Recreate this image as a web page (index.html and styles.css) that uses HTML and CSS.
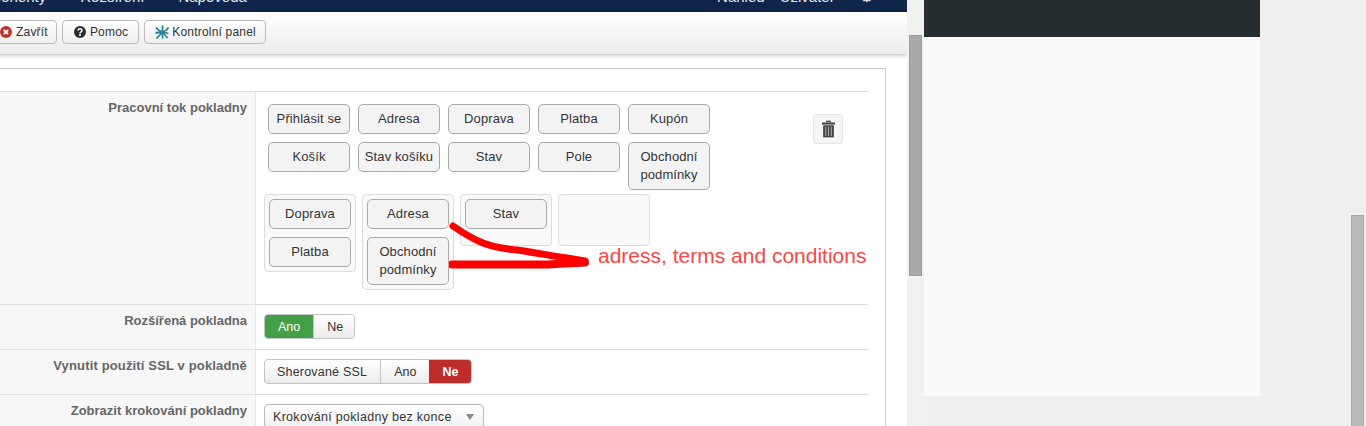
FILE: index.html
```html
<!DOCTYPE html>
<html lang="cs">
<head>
    <meta charset="UTF-8">
    <meta name="viewport" content="width=device-width, initial-scale=1.0">
    <title>Pracovní tok pokladny</title>
    <link rel="stylesheet" href="styles.css">
</head>
<body>
    <div class="admin">
        <nav class="topnav">
            <div class="topnav-left">
                <span>Komponenty</span>
                <span>Rozšíření</span>
                <span>Nápověda</span>
            </div>
            <div class="topnav-right">
                <span>Náhled</span>
                <span>Uživatel</span>
                <span class="topnav-gear">⚙</span>
            </div>
        </nav>

        <div class="toolbar">
            <button class="tool-btn tool-btn-close">
                <svg class="tool-icon" viewBox="0 0 12 12"><circle cx="6" cy="6" r="6" fill="#c4302b"/><path d="M3.8 3.8l4.4 4.4M8.2 3.8l-4.4 4.4" stroke="#fff" stroke-width="1.9"/></svg>
                Zavřít
            </button>
            <button class="tool-btn">
                <svg class="tool-icon" viewBox="0 0 12 12"><circle cx="6" cy="6" r="6" fill="#2b2b2b"/><path d="M4.1 4.6c0-2.4 3.9-2.4 3.9-.2 0 1.5-2 1.4-2 3" fill="none" stroke="#fff" stroke-width="1.5"/><rect x="5.1" y="8.2" width="1.8" height="1.7" fill="#fff"/></svg>
                Pomoc
            </button>
            <button class="tool-btn tool-btn-wide">
                <svg class="tool-icon-star" viewBox="0 0 14 14"><path d="M7.500 .5V13.500M1 2.500C3 5 5 6.500 7.500 7C10 6.500 12 5 13.500 2.500M.5 8L7.500 7L13.500 8.500M1.500 13.500L7.500 7L12.500 13" fill="none" stroke="#2a8595" stroke-width="1.8"/></svg>
                Kontrolní panel
            </button>
        </div>

        <div class="panel">
            <div class="panel-top"></div>

            <div class="form-row form-row-flow">
                <div class="form-label">Pracovní tok pokladny</div>
                <div class="form-field flow-field">
                    <div class="flow-top">
                        <div class="palette">
                            <div class="step">Přihlásit se</div>
                            <div class="step">Adresa</div>
                            <div class="step">Doprava</div>
                            <div class="step">Platba</div>
                            <div class="step">Kupón</div>
                            <div class="step">Košík</div>
                            <div class="step">Stav košíku</div>
                            <div class="step">Stav</div>
                            <div class="step">Pole</div>
                            <div class="step">Obchodní podmínky</div>
                        </div>
                        <div class="trash">
                            <svg viewBox="0 0 14 18" width="13" height="18"><path d="M5 2V.8h4V2" fill="none" stroke="#444" stroke-width="1.2"/><rect y="2" width="14" height="2.2" fill="#444"/><path d="M1.2 5h11.6v13H1.2z" fill="#444"/><path d="M4 6.5v10M7 6.5v10M10 6.5v10" stroke="#bbb" stroke-width="1"/></svg>
                        </div>
                    </div>
                    <div class="columns">
                        <div class="column">
                            <div class="step">Doprava</div>
                            <div class="step">Platba</div>
                        </div>
                        <div class="column">
                            <div class="step">Adresa</div>
                            <div class="step">Obchodní podmínky</div>
                        </div>
                        <div class="column">
                            <div class="step">Stav</div>
                        </div>
                        <div class="column"></div>
                    </div>

                    <!-- red marker scribble from the screenshot -->
                    <svg class="scribble" viewBox="0 0 150 50" width="150" height="50">
                        <path d="M4 4C14 11 24 17 34 21C46 26 58 27 68 28C88 31 104 34 118 36L136 39" fill="none" stroke="#f00" stroke-width="7" stroke-linecap="round"/>
                        <path d="M3 42.500H100C112 42 122 41 136 40.500" fill="none" stroke="#f00" stroke-width="8" stroke-linecap="round"/>
                    </svg>
                    <div class="scribble-note">adress, terms and conditions</div>
                </div>
            </div>

            <div class="form-row">
                <div class="form-label">Rozšířená pokladna</div>
                <div class="form-field">
                    <div class="toggle">
                        <span class="toggle-item toggle-yes">Ano</span>
                        <span class="toggle-item toggle-off">Ne</span>
                    </div>
                </div>
            </div>

            <div class="form-row">
                <div class="form-label form-label-wide">Vynutit použití SSL v pokladně</div>
                <div class="form-field">
                    <div class="toggle">
                        <span class="toggle-item toggle-ssl">Sherované SSL</span>
                        <span class="toggle-item">Ano</span>
                        <span class="toggle-item toggle-no">Ne</span>
                    </div>
                </div>
            </div>

            <div class="form-row">
                <div class="form-label">Zobrazit krokování pokladny</div>
                <div class="form-field">
                    <div class="select">
                        <span>Krokování pokladny bez konce</span>
                        <span class="select-arrow"></span>
                    </div>
                </div>
            </div>
        </div>
    </div>

    <div class="gutter"><div class="thumb"></div></div>

    <aside class="sidebar">
        <div class="sidebar-head"></div>
        <div class="sidebar-body"></div>
    </aside>

    <div class="gutter-page"><div class="thumb-page"></div></div>
</body>
</html>
```

FILE: styles.css
```css
* {
    box-sizing: border-box;
}
body, html {
    margin: 0;
    padding: 0;
    height: 426px;
    overflow: hidden;
}
body {
    display: flex;
    background-color: #efefef;
    font-family: "Liberation Sans", Arial, sans-serif;
    font-size: 12px;
    color: #333;
}
.admin {
    width: 907px;
    flex: none;
    height: 426px;
    background-color: #fff;
    overflow: hidden;
}

/* top nav, only the bottom of its text shows */
.topnav {
    height: 12px;
    background-color: #10254a;
    display: flex;
    justify-content: space-between;
    align-items: flex-end;
    padding-bottom: 7px;
    color: #e4e8ee;
    font-size: 15px;
    line-height: 16px;
    overflow: hidden;
}
.topnav-left {
    display: flex;
    gap: 34px;
    margin-left: -38px;
}
.topnav-right {
    display: flex;
    gap: 15px;
    margin-right: 34px;
}
.topnav-gear {
    margin-left: 12px;
}

.toolbar {
    height: 42px;
    display: flex;
    align-items: flex-start;
    gap: 5px;
    padding-top: 8px;
    margin-left: -12px;
    background: linear-gradient(#fff, #ececec);
    box-shadow: 0 1px 4px rgba(0, 0, 0, 0.3);
    position: relative;
}
.tool-btn {
    height: 24px;
    display: flex;
    align-items: center;
    gap: 4px;
    padding: 0 10px 0 11px;
    background: linear-gradient(#fff, #eee);
    border: 1px solid #bbb;
    border-radius: 4px;
    font-family: inherit;
    font-size: 12px;
    letter-spacing: 0.2px;
    color: #333;
}
.tool-btn-close {
    padding-right: 8px;
}
.tool-btn-wide {
    padding: 0 9px 0 10px;
    gap: 3px;
}
.tool-icon {
    width: 12px;
    height: 12px;
}
.tool-icon-star {
    width: 14px;
    height: 14px;
}

.panel {
    margin: 14px 21px 0 -10px;
    border: 1px solid #ccc;
    padding-right: 17px;
}
.panel-top {
    height: 23px;
    border-bottom: 1px solid #ddd;
}

.form-row {
    display: flex;
    height: 45px;
    border-bottom: 1px solid #ddd;
}
.form-row-flow {
    height: 213px;
}
.form-label {
    width: 265px;
    flex: none;
    background-color: #f7f7f7;
    border-right: 1px solid #e8e8e8;
    padding: 8px 8px 0 0;
    text-align: right;
    font-size: 13px;
    line-height: 16px;
    font-weight: bold;
    color: #666;
}
.form-label-wide {
    letter-spacing: 0.15px;
}
.form-field {
    flex: 1;
    padding: 9px 0 0 8px;
}

.flow-field {
    position: relative;
    padding-top: 12px;
}
.flow-top {
    display: flex;
    align-items: flex-start;
}
.palette {
    width: 450px;
    margin-left: 4px;
    height: 90px;
    display: grid;
    grid-template-columns: repeat(5, 82px);
    column-gap: 8px;
    row-gap: 8px;
    align-items: start;
    align-content: start;
}
.step {
    min-height: 30px;
    padding: 5px 2px;
    background-color: #f3f3f3;
    border: 1px solid #a9a9a9;
    border-radius: 5px;
    text-align: center;
    font-size: 13px;
    line-height: 18px;
    letter-spacing: 0.1px;
    color: #333;
}
.trash {
    width: 30px;
    height: 30px;
    margin: 10px 0 0 95px;
    display: flex;
    align-items: center;
    justify-content: center;
    background-color: #f5f5f5;
    border: 1px solid #e6e6e6;
    border-radius: 3px;
}
.columns {
    display: flex;
    align-items: flex-start;
    gap: 6px;
}
.column {
    width: 92px;
    min-height: 52px;
    display: flex;
    flex-direction: column;
    gap: 8px;
    padding: 4px;
    background-color: #f9f9f9;
    border: 1px solid #ddd;
    border-radius: 4px;
}

.scribble {
    position: absolute;
    left: 193px;
    top: 130px;
}
.scribble-note {
    position: absolute;
    left: 342px;
    top: 152px;
    font-size: 21px;
    line-height: 24px;
    color: #ff4343;
    white-space: nowrap;
}

.toggle {
    display: inline-flex;
    height: 25px;
    border: 1px solid #c4c4c4;
    border-radius: 4px;
    background: linear-gradient(#fff, #ececec);
    overflow: hidden;
}
.toggle-item {
    display: flex;
    align-items: center;
    padding: 0 13px;
    font-size: 12.5px;
    color: #333;
    border-left: 1px solid #c4c4c4;
}
.toggle-item:first-child {
    border-left: none;
}
.toggle-yes {
    background-color: #44a047;
    color: #fff;
}
.toggle-off {
    padding-right: 11px;
}
.toggle-no {
    background-color: #bd2d2b;
    color: #fff;
    font-weight: bold;
    border-left: none;
    padding: 0 13px;
}
.toggle-ssl {
    letter-spacing: 0.2px;
    padding: 0 13px 0 12px;
}

.select {
    width: 220px;
    height: 25px;
    display: flex;
    align-items: center;
    justify-content: space-between;
    padding: 0 9px 0 8px;
    background: linear-gradient(#fff, #f0f0f0);
    border: 1px solid #bbb;
    border-radius: 4px;
    font-size: 12.5px;
    letter-spacing: 0.3px;
}
.select-arrow {
    width: 0;
    height: 0;
    border-left: 4px solid transparent;
    border-right: 4px solid transparent;
    border-top: 6px solid #888;
}

.gutter {
    width: 17px;
    flex: none;
    padding: 35px 2px 0;
    background-color: #f1f1f1;
}
.thumb {
    height: 241px;
    background-color: #a9a9ab;
    border: 1px solid #9c9c9c;
}

.sidebar {
    width: 336px;
    flex: none;
    height: 396px;
    display: flex;
    flex-direction: column;
}
.sidebar-head {
    height: 37px;
    background-color: #272e31;
}
.sidebar-body {
    flex: 1;
    background-color: #f9f9f9;
}

.gutter-page {
    flex: 1;
    padding: 215px 2px 0 91px;
}
.thumb-page {
    height: 300px;
    background-color: #b9b9b9;
    border: 1px solid #a9a9a9;
}
```
